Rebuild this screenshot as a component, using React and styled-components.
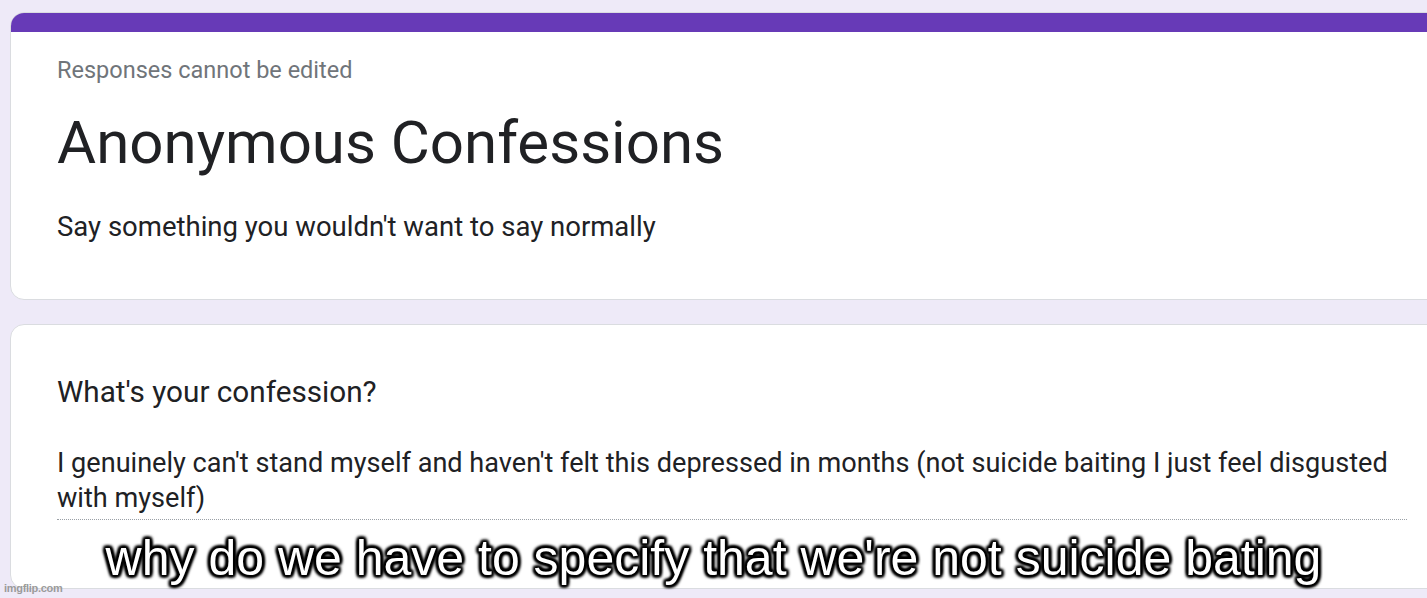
import React from "react";
import styled, { createGlobalStyle } from "styled-components";

const Global = createGlobalStyle`
  html, body {
    margin: 0;
    padding: 0;
    background: #eeeaf8;
    overflow: hidden;
  }
  body {
    font-family: Roboto, "Liberation Sans", Arial, sans-serif;
    color: #202124;
  }
`;

const Page = styled.div`
  position: relative;
  width: 1427px;
  height: 598px;
  padding: 12px 0 0 10px;
  box-sizing: border-box;
  display: flex;
  flex-direction: column;
  gap: 24px;
`;

const Card = styled.div`
  width: 1440px;
  flex-shrink: 0;
  box-sizing: border-box;
  background: #fff;
  border: 1px solid #dadce0;
  border-radius: 14px;
  overflow: hidden;
  height: ${(p) => p.h}px;
`;

const TopBar = styled.div`
  height: 19px;
  background: #673ab7;
`;

const Inner = styled.div`
  padding: ${(p) => p.pad};
`;

const Note = styled.div`
  font-size: 23.5px;
  color: #70757a;
  line-height: 26px;
`;

const Title = styled.h1`
  margin: 0;
  font-size: 60px;
  font-weight: 400;
  line-height: 70px;
  margin-top: 25px;
`;

const Desc = styled.div`
  font-size: 27.5px;
  line-height: 32px;
  margin-top: 33px;
`;

const Question = styled.div`
  font-size: 29.7px;
  line-height: 32px;
`;

const Answer = styled.div`
  margin-top: 38px;
  font-size: 27.1px;
  line-height: 35px;
  padding-bottom: 3px;
  border-bottom: 1px dotted #9aa0a6;
  margin-right: 42px;
`;

const Caption = styled.div`
  position: absolute;
  left: 0;
  right: 0;
  top: 533px;
  text-align: center;
  font-family: "Liberation Sans", Arial, sans-serif;
  font-size: 50px;
  line-height: 50px;
  color: #fff;
  text-shadow:
    0 0 2px #000, 0 0 3px #000, 0 0 4px #000, 0 0 5px #000,
    2px 2px 3px #000, -2px -2px 3px #000, 2px -2px 3px #000, -2px 2px 3px #000,
    0 2px 3px #000, 0 -2px 3px #000, 2px 0 3px #000, -2px 0 3px #000;
`;

const Watermark = styled.div`
  position: absolute;
  left: 4px;
  top: 582px;
  font-family: "Liberation Sans", Arial, sans-serif;
  font-size: 11px;
  font-weight: 700;
  color: #9b9b9b;
  letter-spacing: -0.3px;
`;

export default function App() {
  return (
    <>
      <Global />
      <Page>
        <Card h={288}>
          <TopBar />
          <Inner pad="25px 24px 0 46px">
            <Note>Responses cannot be edited</Note>
            <Title>Anonymous Confessions</Title>
            <Desc>Say something you wouldn't want to say normally</Desc>
          </Inner>
        </Card>
        <Card h={265}>
          <Inner pad="51px 0 0 46px">
            <Question>What's your confession?</Question>
            <Answer>
              I genuinely can't stand myself and haven't felt this depressed in
              months (not suicide baiting I just feel disgusted with myself)
            </Answer>
          </Inner>
        </Card>
        <Caption>why do we have to specify that we're not suicide bating</Caption>
        <Watermark>imgflip.com</Watermark>
      </Page>
    </>
  );
}
